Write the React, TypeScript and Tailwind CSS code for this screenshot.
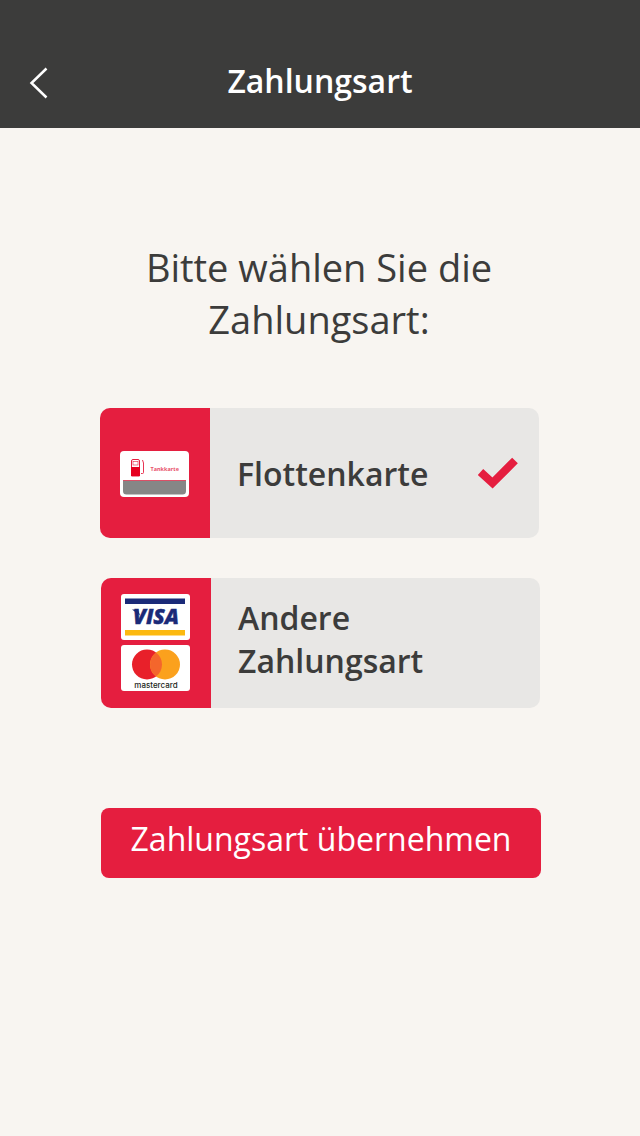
import React from "react";

const font = { fontFamily: '"Open Sans", sans-serif' };

function FleetCardIcon() {
    return (
        <svg width="69" height="46" viewBox="0 0 69 46">
            <rect width="69" height="46" rx="4" fill="#ffffff" />
            <path d="M3 29.500h63V40a3.500 3.500 0 0 1-3.500 3.500h-56A3.500 3.500 0 0 1 3 40z" fill="#868686" />
            <rect x="3" y="29" width="63" height="1" fill="#e51e3f" opacity="0.7" />
            <path d="M11.500 10a1.500 1.500 0 0 1 1.500-1.500h5a1.500 1.500 0 0 1 1.500 1.500v15h-8z" fill="none" stroke="#e51e3f" />
            <rect x="11" y="16" width="9" height="9" fill="#e6001f" />
            <rect x="13" y="10.500" width="5" height="3.500" fill="#ffffff" stroke="#e51e3f" strokeWidth="0.6" />
            <path d="M21 22.500h1.500a1 1 0 0 0 1-1V12l-1-3" fill="none" stroke="#e51e3f" strokeWidth="0.9" />
            <text x="30.500" y="20" fontSize="5.500" fontWeight="700" fill="#e8506a" fontFamily="Open Sans, sans-serif">
                Tankkarte
            </text>
        </svg>
    );
}

function VisaIcon() {
    return (
        <svg width="69" height="46" viewBox="0 0 69 46">
            <rect width="69" height="46" rx="3" fill="#ffffff" />
            <rect x="4" y="4.500" width="60" height="5.500" fill="#1a2a78" />
            <rect x="4" y="36" width="60" height="5.500" fill="#fcb90f" />
            <path d="M11 15.500h6l2 6z" fill="#1a2a78" />
            <text x="35" y="30" textAnchor="middle" fontSize="21" fontWeight="800" fontStyle="italic" fill="#1a2a78" stroke="#1a2a78" strokeWidth="0.4" fontFamily="Open Sans, sans-serif">
                VISA
            </text>
        </svg>
    );
}

function MastercardIcon() {
    return (
        <svg width="69" height="46" viewBox="0 0 69 46">
            <rect width="69" height="46" rx="3" fill="#ffffff" />
            <circle cx="26" cy="19.500" r="15" fill="#e8202a" />
            <circle cx="44" cy="19.500" r="15" fill="#fba11d" />
            <path d="M35 7.500a15 15 0 0 1 0 24a15 15 0 0 1 0-24z" fill="#f4662c" />
            <text x="35" y="43" textAnchor="middle" fontSize="8" fontWeight="500" fill="#231f20" fontFamily="Inter, sans-serif">
                mastercard
            </text>
        </svg>
    );
}

export default function App() {
    return (
        <div className="w-[640px] h-[1136px] bg-[#f8f5f1] text-[#3c3c3b] overflow-hidden" style={font}>
            <header className="h-[128px] bg-[#3c3c3b] pt-[36px] flex items-center justify-center relative">
                <svg className="absolute left-[28px] top-[66px]" width="22" height="34" viewBox="0 0 22 34" fill="none">
                    <path d="M18.500 2.500L3.500 17l15 14.500" stroke="#ffffff" strokeWidth="2.500" />
                </svg>
                <h1 className="text-[32px] leading-[40px] font-semibold text-white -mt-[2px]">Zahlungsart</h1>
            </header>

            <p className="mt-[113px] text-center text-[38px] leading-[52px] -ml-[2px]">
                Bitte wählen Sie die
                <br />
                Zahlungsart:
            </p>

            <div className="mt-[63px] ml-[100px] w-[439px] h-[130px] rounded-[10px] overflow-hidden flex bg-[#e8e7e5]">
                <div className="w-[110px] bg-[#e51e3f] flex items-center justify-center pt-[2px] pr-[1px]">
                    <FleetCardIcon />
                </div>
                <div className="flex-1 flex items-center justify-between pl-[27px] pr-[20px]">
                    <span className="text-[32px] leading-[43px] font-semibold">Flottenkarte</span>
                    <svg width="42" height="32" viewBox="0 0 42 32" className="-mt-[1px]">
                        <path d="M3.500 15L15.500 26L38 3.500" fill="none" stroke="#e51e3f" strokeWidth="8" />
                    </svg>
                </div>
            </div>

            <div className="mt-[40px] ml-[101px] w-[439px] h-[130px] rounded-[10px] overflow-hidden flex bg-[#e8e7e5]">
                <div className="w-[110px] bg-[#e51e3f] flex flex-col items-center justify-center gap-[5px] pb-[1px] pr-[1px]">
                    <VisaIcon />
                    <MastercardIcon />
                </div>
                <div className="flex-1 flex items-center pl-[27px] pb-[9px]">
                    <span className="text-[32px] leading-[43px] font-semibold">
                        Andere
                        <br />
                        Zahlungsart
                    </span>
                </div>
            </div>

            <button className="block mt-[100px] ml-[101px] w-[440px] h-[70px] rounded-[8px] bg-[#e51e3f] text-white text-[32px] leading-[62px] pb-[8px]">
                Zahlungsart übernehmen
            </button>
        </div>
    );
}
